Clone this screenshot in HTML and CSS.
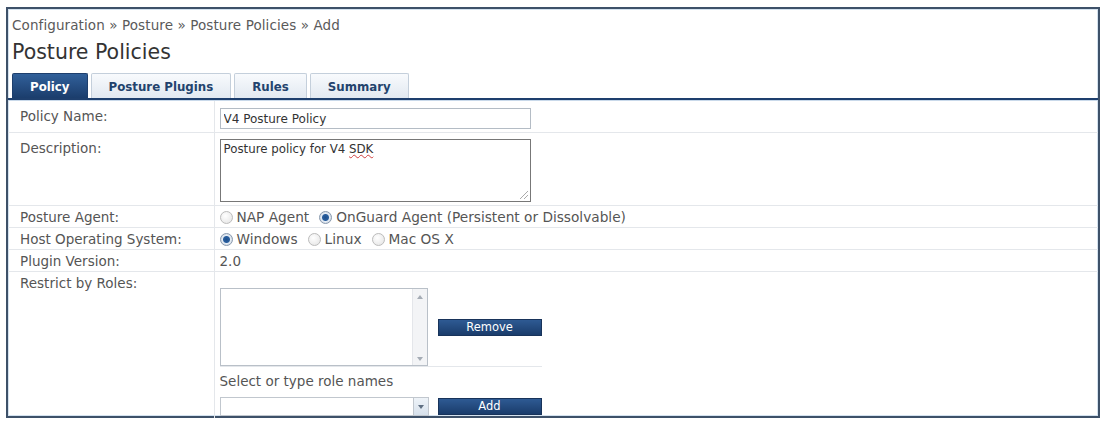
FILE: index.html
```html
<!DOCTYPE html>
<html lang="en">
<head>
    <meta charset="UTF-8">
    <meta name="viewport" content="width=device-width, initial-scale=1.0">
    <title>Posture Policies</title>
    <link rel="stylesheet" href="styles.css">
</head>
<body>

    <div class="panel">
        <div class="breadcrumb">Configuration &raquo; Posture &raquo; Posture Policies &raquo; Add</div>
        <h1>Posture Policies</h1>

        <!-- Tabs -->
        <ul class="tabs">
            <li class="active">Policy</li>
            <li>Posture Plugins</li>
            <li>Rules</li>
            <li>Summary</li>
        </ul>

        <table class="form">
            <tr class="input-row">
                <th>Policy Name:</th>
                <td><input type="text" class="text-field" value="V4 Posture Policy"></td>
            </tr>
            <tr class="input-row">
                <th>Description:</th>
                <td>
                    <div class="textarea">Posture policy for V4 <span class="spell">SDK</span><span class="grip"></span></div>
                </td>
            </tr>
            <tr>
                <th>Posture Agent:</th>
                <td>
                    <div class="radios">
                        <label class="radio"><input type="radio" name="agent"> NAP Agent</label>
                        <label class="radio"><input type="radio" name="agent" checked> OnGuard Agent (Persistent or Dissolvable)</label>
                    </div>
                </td>
            </tr>
            <tr>
                <th>Host Operating System:</th>
                <td>
                    <div class="radios">
                        <label class="radio"><input type="radio" name="os" checked> Windows</label>
                        <label class="radio"><input type="radio" name="os"> Linux</label>
                        <label class="radio"><input type="radio" name="os"> Mac OS X</label>
                    </div>
                </td>
            </tr>
            <tr>
                <th>Plugin Version:</th>
                <td>2.0</td>
            </tr>
            <tr class="last">
                <th>Restrict by Roles:</th>
                <td>
                    <div class="roles">
                        <div class="roles-top">
                            <div class="listbox">
                                <div class="scroll"><span class="arrow up"></span><span class="arrow down"></span></div>
                            </div>
                            <button class="btn">Remove</button>
                        </div>
                        <div class="roles-hint">Select or type role names</div>
                        <div class="roles-add">
                            <div class="combo"><span class="combo-arrow"><span class="arrow down"></span></span></div>
                            <button class="btn">Add</button>
                        </div>
                    </div>
                </td>
            </tr>
        </table>
    </div>

</body>
</html>
```

FILE: styles.css
```css
/* Basic Reset */
* {
    margin: 0;
    padding: 0;
    box-sizing: border-box;
}

body {
    font-family: "DejaVu Sans", Verdana, sans-serif;
    background-color: #FFFFFF;
    color: #555;
}

/* Outer panel */
.panel {
    margin: 7px 3px 0 6px;
    height: 411px;
    border: 2px solid #3e5169;
    box-shadow: inset 0 0 0 1px #d4e2ef;
    background-color: #FFFFFF;
}

.breadcrumb {
    padding: 8px 0 0 4px;
    font-size: 13.5px;
    line-height: 16px;
    letter-spacing: 0.1px;
    color: #5a5a5a;
}

h1 {
    margin-top: 6px;
    padding-left: 4px;
    font-size: 20.5px;
    line-height: 26px;
    font-weight: normal;
    color: #333;
}

/* Tabs */
.tabs {
    list-style: none;
    display: flex;
    gap: 3px;
    margin-top: 8px;
    padding-left: 4px;
    border-bottom: 2px solid #1e3f6d;
    box-shadow: 0 1px 0 #c9d9ea;
}

.tabs li {
    height: 25px;
    padding: 0 17px;
    font-size: 11.8px;
    font-weight: bold;
    line-height: 26px;
    color: #23436d;
    background: linear-gradient(#f8fafd, #e2e9f1);
    border: 1px solid #c4cfdb;
    border-bottom: none;
    border-radius: 2px 2px 0 0;
}

.tabs li.active {
    color: #FFFFFF;
    background: linear-gradient(#31609a, #1b3d6c);
    border-color: #1e3f6d;
}

/* Form table */
.form {
    width: 100%;
    margin-top: 1px;
    border-collapse: collapse;
}

.form th,
.form td {
    vertical-align: top;
    padding: 4px 5px 3px;
    border-bottom: 1px solid #e4e7eb;
    font-size: 13.5px;
    line-height: 14px;
    color: #555;
}

.form th {
    width: 206px;
    padding-left: 12px;
    text-align: left;
    font-weight: normal;
    border-right: 1px solid #e4e7eb;
}

.form tr.input-row th {
    padding-top: 8px;
}

.form tr.input-row td {
    padding-top: 6px;
    padding-bottom: 3px;
}

.form tr.last th,
.form tr.last td {
    border-bottom: none;
}

.text-field {
    display: block;
    width: 311px;
    height: 21px;
    margin-top: 1px;
    padding: 0 3px;
    border: 1px solid #b4bcc5;
    font-family: "DejaVu Sans", Verdana, sans-serif;
    font-size: 12px;
    color: #333;
}

.textarea {
    position: relative;
    width: 311px;
    height: 63px;
    padding: 2px 3px;
    border: 1px solid #777;
    font-size: 11.8px;
    line-height: 14px;
    color: #333;
}

.spell {
    text-decoration: underline wavy #d04040;
    text-decoration-thickness: 1px;
}

/* resize handle in the corner of the textarea */
.grip {
    position: absolute;
    right: 2px;
    bottom: 2px;
    width: 8px;
    height: 8px;
    background: linear-gradient(135deg, transparent 45%, #aaa 45%, #aaa 55%, transparent 55%, transparent 70%, #aaa 70%, #aaa 80%, transparent 80%);
}

/* Radio buttons */
.radios {
    display: flex;
    align-items: center;
    gap: 10px;
    height: 14px;
}

.radio {
    display: flex;
    align-items: center;
    gap: 4px;
    font-size: 13.7px;
    color: #555;
}

.radio input {
    appearance: none;
    flex: none;
    width: 13px;
    height: 13px;
    border: 1px solid #bcbcbc;
    border-radius: 50%;
    background: radial-gradient(circle at 40% 35%, #ffffff, #e2e2e2);
}

.radio input:checked {
    border-color: #8a9aae;
    background: radial-gradient(circle, #1e4f8c 0, #2a5f9e 3px, #e6edf5 4px, #cfd8e2 6px);
}

/* Role picker */
.roles {
    width: 322px;
}

.roles-top {
    display: flex;
    align-items: center;
    gap: 10px;
    padding-top: 12px;
    border-bottom: 1px solid #e4e7eb;
}

.listbox {
    display: flex;
    justify-content: flex-end;
    width: 208px;
    height: 78px;
    border: 1px solid #b9c0c8;
}

.scroll {
    display: flex;
    flex-direction: column;
    justify-content: space-between;
    align-items: center;
    width: 15px;
    padding: 6px 0 4px;
    background-color: #f3f4f6;
    border-left: 1px solid #e4e6ea;
}

.arrow {
    width: 0;
    height: 0;
    border-left: 3px solid transparent;
    border-right: 3px solid transparent;
}

.arrow.up {
    border-bottom: 4px solid #a5acb5;
}

.arrow.down {
    border-top: 4px solid #a5acb5;
}

.btn {
    width: 104px;
    height: 17px;
    border: 1px solid #18335a;
    background: linear-gradient(#2e5a93, #1a3c6b);
    color: #FFFFFF;
    font-family: "DejaVu Sans", Verdana, sans-serif;
    font-size: 11.5px;
    line-height: 15px;
}

.roles-hint {
    padding: 7px 0 9px;
    font-size: 13.5px;
    color: #555;
}

.roles-add {
    display: flex;
    align-items: center;
    gap: 9px;
}

.combo {
    display: flex;
    justify-content: flex-end;
    width: 209px;
    height: 19px;
    border: 1px solid #c1c7ce;
}

.combo-arrow {
    display: flex;
    align-items: center;
    justify-content: center;
    width: 15px;
    background: linear-gradient(#eef3f8, #d7e1ec);
    border-left: 1px solid #c1c7ce;
}

.combo-arrow .arrow.down {
    border-top-color: #5f6f82;
}
```
